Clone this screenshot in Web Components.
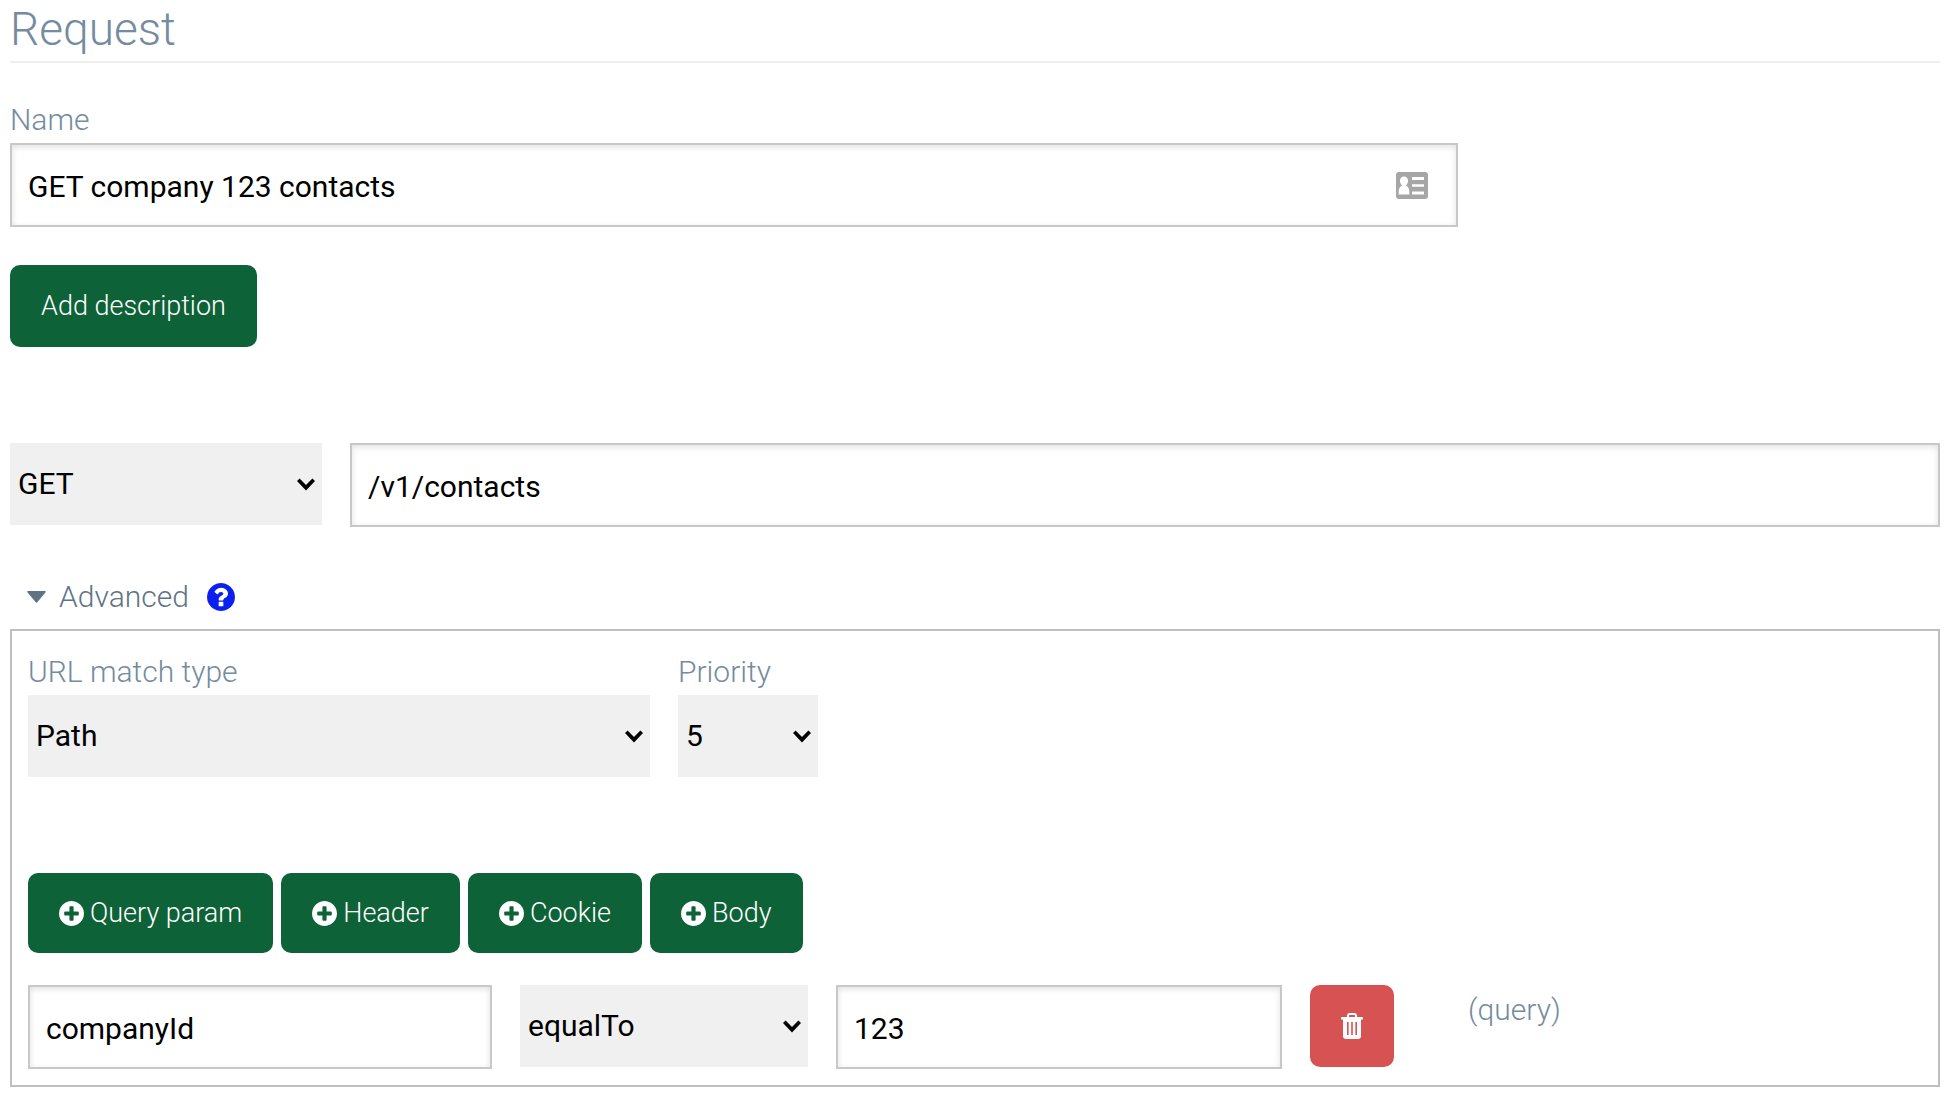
<!DOCTYPE html>
<html lang="en">
<head>
<meta charset="utf-8">
<title>Request</title>
<style>
  body { margin: 0; background: #fff; font-family: Roboto, "Liberation Sans", sans-serif; font-weight: 300; font-size: 30px; line-height: 38px; color: #748ba0; }
</style>
</head>
<body>
<request-page></request-page>
<script>
const define = (name, html, setup) => {
  const t = document.createElement('template');
  t.innerHTML = html;
  customElements.define(name, class extends HTMLElement {
    constructor() {
      super();
      this.attachShadow({ mode: 'open' }).append(t.content.cloneNode(true));
    }
    connectedCallback() { if (setup) setup(this, this.shadowRoot); }
  });
};

const CIRCLE = 'M1664 896q0 209-103 385.5t-279.5 279.5-385.5 103-385.5-103-279.5-279.5-103-385.5 103-385.5 279.5-279.5 385.5-103 385.5 103 279.5 279.5 103 385.5z';
const ICONS = {
  plus: ['128 128 1536 1536', 'M1344 960v-128q0-26-19-45t-45-19h-256v-256q0-26-19-45t-45-19h-128q-26 0-45 19t-19 45v256h-256q-26 0-45 19t-19 45v128q0 26 19 45t45 19h256v256q0 26 19 45t45 19h128q26 0 45-19t19-45v-256h256q26 0 45-19t19-45z' + CIRCLE],
  help: ['128 128 1536 1536', 'M1024 1376v-192q0-14-9-23t-23-9h-192q-14 0-23 9t-9 23v192q0 14 9 23t23 9h192q14 0 23-9t9-23zm256-672q0-88-55.5-163t-138.5-116-170-41q-243 0-371 213-15 24 8 42l132 100q7 6 19 6 16 0 25-12 53-68 86-92 34-24 86-24 48 0 85.5 26t37.5 59q0 38-20 61t-68 45q-63 28-115.5 86.5t-52.5 125.5v36q0 14 9 23t23 9h192q14 0 23-9t9-23q0-19 21.5-49.5t54.5-49.5q32-18 49-28.5t46-35 44.5-48 28-60.5 12.5-81z' + CIRCLE],
  trash: ['0 0 22 26', 'M6 4V2.500C6 1.100 7.100 0 8.500 0h5C14.900 0 16 1.100 16 2.500V4h5a1 1 0 0 1 1 1v1.500H0V5a1 1 0 0 1 1-1zM8 4h6V2.600c0-.4-.2-.6-.6-.6H8.600c-.4 0-.6.2-.6.600zM2 6.500h18V23a3 3 0 0 1-3 3H5a3 3 0 0 1-3-3zM6 9v13h1.600V9zM10.200 9v13h1.600V9zM14.400 9v13H16V9z'],
  card: ['0 0 32 27', 'M3 0h26a3 3 0 0 1 3 3v21a3 3 0 0 1-3 3H3a3 3 0 0 1-3-3V3a3 3 0 0 1 3-3zM8 4.500a4 4 0 0 0-4 4.300c0 2 .8 3.700 2 4.700C4 14.500 2.700 16.500 2.700 19v3.500h10.600V19c0-2.500-1.300-4.500-3.300-5.500 1.200-1 2-2.700 2-4.700a4 4 0 0 0-4-4.300zM16 5v3h12V5zM16 12.300v2.400h12v-2.400zM16 19.500v3h12v-3z'],
  caret: ['0 0 19 12', 'M1 0h17q1.500 0 .6 1.200L10.500 11q-1 1.300-2 0L.4 1.200Q-.5 0 1 0z'],
  chevron: ['0 0 18 12', 'M2.600 0 9 6.400 15.400 0 18 2.600 9 12 0 2.600z']
};

define('ui-icon', `
  <style>:host { display: block; flex: none; } svg { display: block; width: 100%; height: 100%; }</style>
  <svg aria-hidden="true"><path fill="currentColor" fill-rule="evenodd"/></svg>`,
  (el, root) => {
    const [box, d] = ICONS[el.getAttribute('name')];
    root.querySelector('svg').setAttribute('viewBox', box);
    root.querySelector('path').setAttribute('d', d);
  });

define('text-field', `
  <style>
    :host { display: block; min-width: 0; }
    label { display: block; padding-bottom: 4px; }
    label[hidden] { display: none; }
    .box { display: grid; align-items: center; }
    input { grid-area: 1 / 1; box-sizing: border-box; width: 100%; height: 84px; margin: 0; padding: 2px 16px 0; border: 2px solid #c8c8c8; border-radius: 0; background: #fff;
      box-shadow: inset 0 2px 6px rgba(0,0,0,.12); font: inherit; font-weight: 400; color: #000; }
    ::slotted(ui-icon) { grid-area: 1 / 1; justify-self: end; width: 32px; height: 27px; margin-right: 30px; color: #a6a6a6; }
  </style>
  <label for="i"></label>
  <div class="box"><input id="i" type="text"><slot></slot></div>`,
  (el, root) => {
    const label = root.querySelector('label'), input = root.querySelector('input');
    label.textContent = el.getAttribute('label') || '';
    label.hidden = !el.hasAttribute('label');
    input.value = el.getAttribute('value');
    if (el.hasAttribute('name')) input.setAttribute('aria-label', el.getAttribute('name'));
  });

define('select-field', `
  <style>
    :host { display: block; min-width: 0; }
    label { display: block; padding-bottom: 4px; }
    label[hidden] { display: none; }
    .box { display: grid; align-items: center; }
    select { grid-area: 1 / 1; appearance: none; box-sizing: border-box; width: 100%; height: 82px; margin: 0; padding: 0 8px; border: 0; border-radius: 0; background: #f0f0f0; font: inherit; font-weight: 400; color: #000; }
    ui-icon { grid-area: 1 / 1; justify-self: end; width: 18px; height: 13px; margin-right: 7px; color: #000; pointer-events: none; }
  </style>
  <label for="s"></label>
  <div class="box"><select id="s"></select><ui-icon name="chevron"></ui-icon></div>`,
  (el, root) => {
    const label = root.querySelector('label'), select = root.querySelector('select');
    label.textContent = el.getAttribute('label') || '';
    label.hidden = !el.hasAttribute('label');
    select.append(new Option(el.getAttribute('value')));
    if (el.hasAttribute('name')) select.setAttribute('aria-label', el.getAttribute('name'));
  });

define('action-button', `
  <style>
    :host { display: block; flex: none; }
    button { display: flex; align-items: center; justify-content: center; gap: 6px; box-sizing: border-box; height: var(--height, 82px); margin: 0; padding: 0 31px; border: 0; border-radius: 10px;
      background: var(--fill, #0e6237); color: #fff; font: inherit; font-size: 27px; cursor: pointer; }
    ::slotted(ui-icon) { width: 25px; height: 25px; }
    ::slotted(ui-icon[name=trash]) { width: 22px; height: 26px; }
  </style>
  <button type="button"><slot></slot></button>`,
  (el, root) => {
    if (el.hasAttribute('name')) root.querySelector('button').setAttribute('aria-label', el.getAttribute('name'));
  });

define('matcher-row', `
  <style>
    :host { display: grid; grid-template-columns: 464fr 288fr 446fr 84fr 500fr; column-gap: 28px; align-items: start; }
    action-button { --fill: #d75353; }
    span { padding: 6px 0 0 46px; }
  </style>
  <text-field name="Parameter name" value="companyId"></text-field>
  <select-field name="Operator" value="equalTo"></select-field>
  <text-field name="Expected value" value="123"></text-field>
  <action-button name="Delete"><ui-icon name="trash"></ui-icon></action-button>
  <span>(query)</span>`);

define('advanced-section', `
  <style>
    :host { display: block; }
    summary { display: flex; align-items: center; list-style: none; height: 40px; padding: 0 17px; margin-bottom: 12px; color: #5f7387; cursor: pointer; }
    summary > ui-icon { width: 19px; height: 12px; margin-right: 13px; }
    a { margin-left: 18px; color: #0a1ff0; }
    a ui-icon { width: 28px; height: 28px; }
    .panel { box-sizing: border-box; border: 2px solid #bfbfbf; padding: 22px 16px 16px; }
    .match { display: grid; grid-template-columns: 622fr 140fr 1076fr; column-gap: 28px; }
    .buttons { display: flex; gap: 8px; margin: 96px 0 32px; --height: 80px; }
  </style>
  <details open>
    <summary><ui-icon name="caret"></ui-icon>Advanced<a href="#help" aria-label="Help"><ui-icon name="help"></ui-icon></a></summary>
    <div class="panel">
      <div class="match">
        <select-field label="URL match type" value="Path"></select-field>
        <select-field label="Priority" value="5"></select-field>
      </div>
      <div class="buttons">
        <action-button><ui-icon name="plus"></ui-icon>Query param</action-button>
        <action-button><ui-icon name="plus"></ui-icon>Header</action-button>
        <action-button><ui-icon name="plus"></ui-icon>Cookie</action-button>
        <action-button><ui-icon name="plus"></ui-icon>Body</action-button>
      </div>
      <matcher-row></matcher-row>
    </div>
  </details>`);

define('request-page', `
  <style>
    :host { display: block; padding: 0 10px 12px; }
    h1 { margin: 0; height: 61px; border-bottom: 2px solid #eee; font-size: 46px; line-height: 58px; font-weight: 300; }
    .name { width: 75%; margin: 38px 0; }
    .url { display: grid; grid-template-columns: 312fr 1590fr; column-gap: 28px; margin: 96px 0 50px; align-items: start; }
  </style>
  <h1>Request</h1>
  <text-field class="name" label="Name" value="GET company 123 contacts"><ui-icon name="card"></ui-icon></text-field>
  <action-button>Add description</action-button>
  <div class="url">
    <select-field name="Method" value="GET"></select-field>
    <text-field name="URL" value="/v1/contacts"></text-field>
  </div>
  <advanced-section></advanced-section>`);
</script>
</body>
</html>
